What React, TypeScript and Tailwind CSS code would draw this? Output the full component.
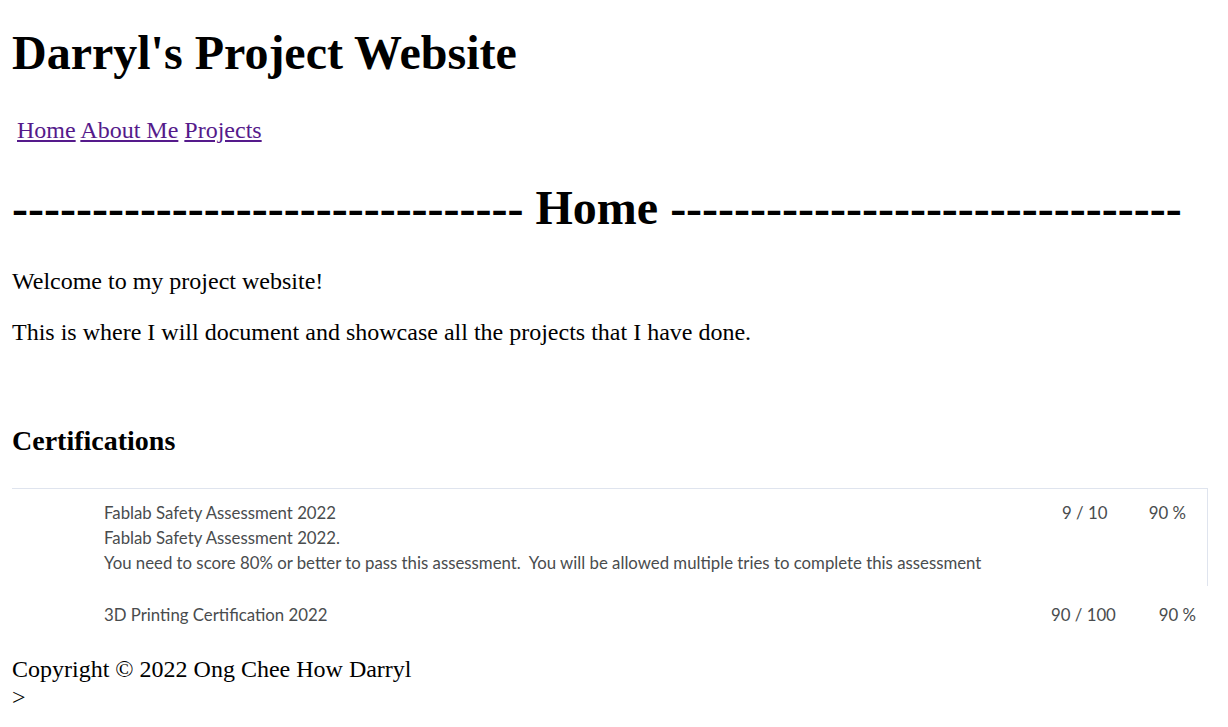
import React from "react";

const dashes = "-".repeat(32);

function CertRow(props: {
  title: string;
  score: string;
  percent: string;
  scoreClass: string;
  percentClass: string;
  children?: React.ReactNode;
}) {
  return (
    <div className="flex items-start">
      <div className="w-[92px] shrink-0" />
      <div className="flex-1">
        <div className="h-[25px] leading-[25px]">{props.title}</div>
        {props.children}
      </div>
      <div className={props.scoreClass}>{props.score}</div>
      <div className={props.percentClass}>{props.percent}</div>
    </div>
  );
}

export default function App() {
  return (
    <div className="min-h-[727px] bg-white px-[12px] text-[24px] leading-[27.6px] text-black font-['Liberation_Serif','Times_New_Roman',serif]">
      <h1 className="pt-[25px] text-[48px] font-bold leading-[55px]">Darryl's Project Website</h1>

      <nav className="mt-[36px] pl-[5px] leading-[28px]">
        <a href="#" className="text-[#551a8b] underline">Home</a>{" "}
        <a href="#" className="text-[#551a8b] underline">About Me</a>{" "}
        <a href="#" className="text-[#551a8b] underline">Projects</a>
      </nav>

      <h2 className="mt-[36px] text-[48px] font-bold leading-[55px] whitespace-nowrap">
        {dashes} Home {dashes}
      </h2>

      <p className="mt-[33px]">Welcome to my project website!</p>
      <p className="mt-[23px]">This is where I will document and showcase all the projects that I have done.</p>

      <h3 className="mt-[79px] text-[28px] font-bold leading-[32px]">Certifications</h3>

      <section className="mt-[31px] text-[16.8px] text-[#494c4e] font-['Lato','Open_Sans',sans-serif]">
        <div className="mr-[8px] border-t border-r border-[#dfe4ee] pt-[11px] pb-[11px]">
          <CertRow
            title="Fablab Safety Assessment 2022"
            score="9 / 10"
            percent="90 %"
            scoreClass="w-[80px] shrink-0 leading-[25px]"
            percentClass="w-[65px] shrink-0 pr-[21px] text-right leading-[25px]"
          >
            <div className="leading-[25px]">Fablab Safety Assessment 2022.</div>
            <div className="leading-[25px] whitespace-pre">
              You need to score 80% or better to pass this assessment.  You will be allowed multiple tries to complete this assessment
            </div>
          </CertRow>
        </div>
        <div className="pt-[16px]">
          <CertRow
            title="3D Printing Certification 2022"
            score="90 / 100"
            percent="90 %"
            scoreClass="w-[90px] shrink-0 leading-[25px]"
            percentClass="w-[75px] shrink-0 pr-[20px] text-right leading-[25px]"
          />
        </div>
      </section>

      <footer className="mt-[29px]">
        <div>Copyright © 2022 Ong Chee How Darryl</div>
        <div>&gt;</div>
      </footer>
    </div>
  );
}
